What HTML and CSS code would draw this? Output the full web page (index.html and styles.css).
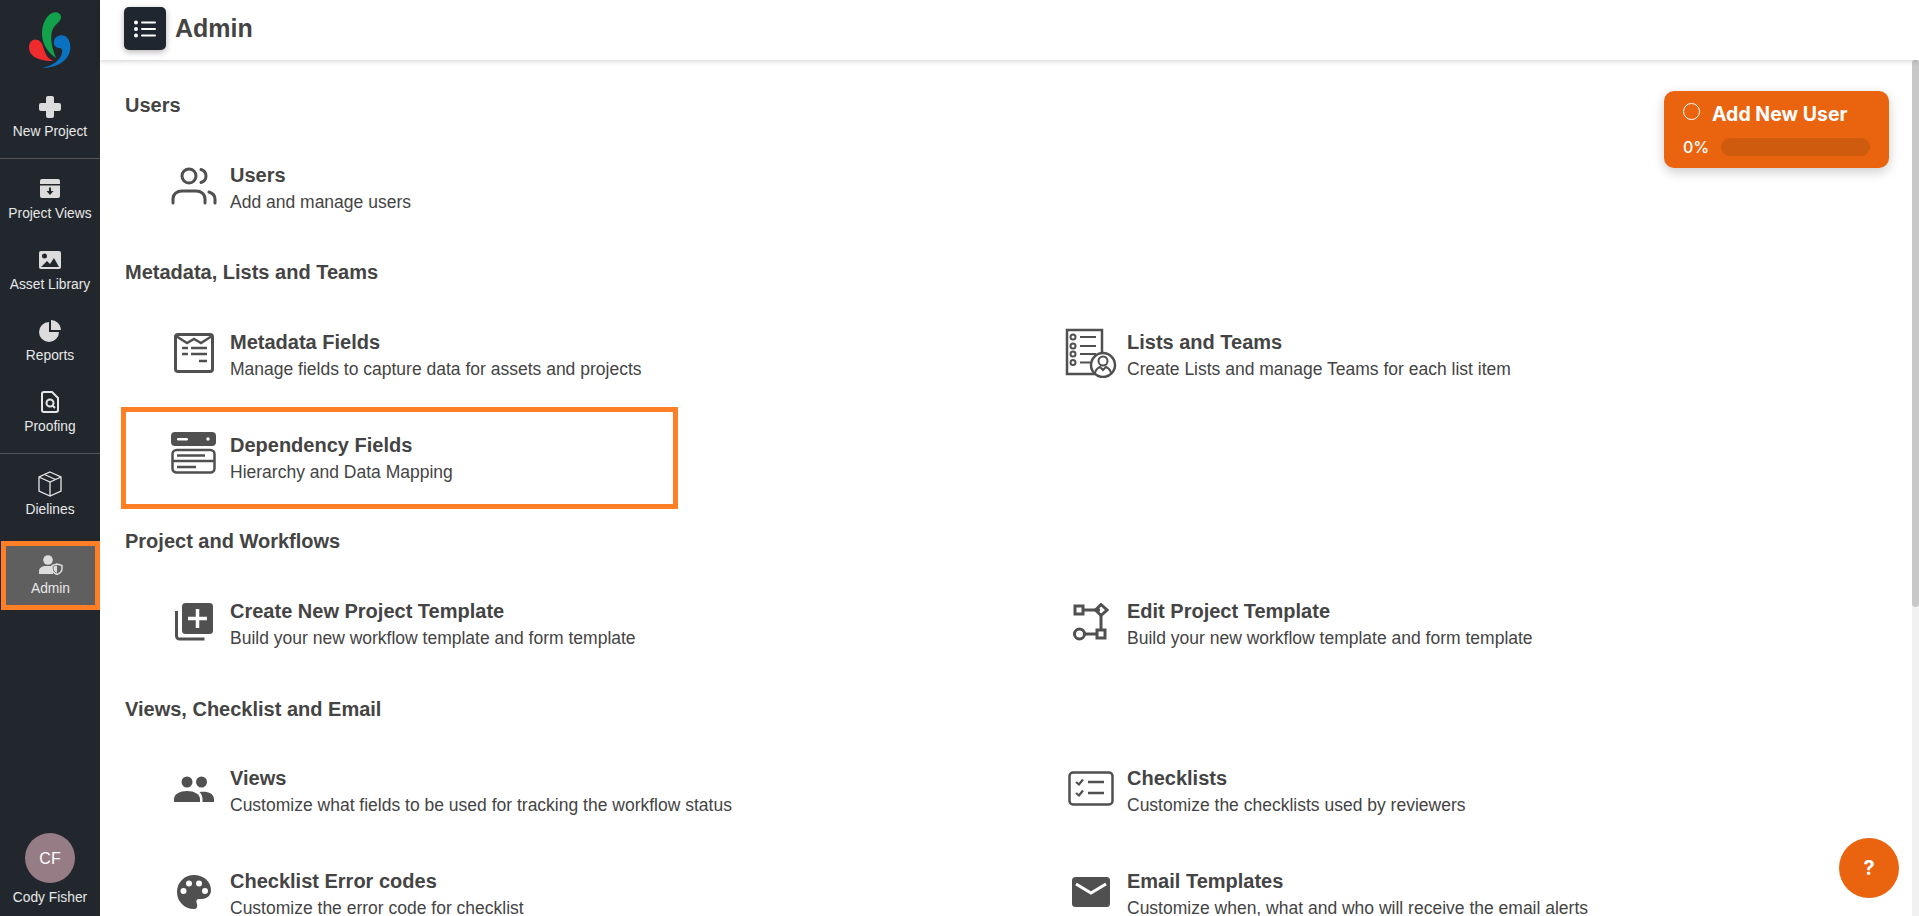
FILE: index.html
```html
<!DOCTYPE html>
<html lang="en">
<head>
    <meta charset="UTF-8">
    <meta name="viewport" content="width=device-width, initial-scale=1.0">
    <title>Admin</title>
    <link rel="stylesheet" href="styles.css">
</head>
<body>
    <div class="app">
        <aside class="sidebar">
            <div class="logo">
                <svg width="44" height="60" viewBox="0 0 44 60">
                    <path fill="#12a24b" d="M24 3C28 1 33 3 33 7C33 11 30 12 26 17C22 22 22 34 28 48C22 44 14 36 14 24C14 14 18 6 24 3z"/>
                    <path fill="#ef2b2d" d="M1 37C1 31 6 28 10 30C15 32 15 38 17 42C18 46 21 49 25 51C16 51 8 49 4 45C2 43 1 40 1 37z"/>
                    <path fill="#0a72c0" d="M26 31C27 26 33 24 37 26C42 29 44 37 41 44C37 53 26 58 14 58C24 56 33 50 34 43C35 39 33 38 31 38C28 38 25 35 26 31z"/>
                </svg>
            </div>
            <a class="nav-item nav-new">
                <div class="nav-icon">
                    <svg width="22" height="22" viewBox="0 0 22 22"><path fill="#dcdcdc" d="M9 0h4a2 2 0 0 1 2 2v5h5a2 2 0 0 1 2 2v4a2 2 0 0 1-2 2h-5v5a2 2 0 0 1-2 2H9a2 2 0 0 1-2-2v-5H2a2 2 0 0 1-2-2V9a2 2 0 0 1 2-2h5V2a2 2 0 0 1 2-2z"/></svg>
                </div>
                <span>New Project</span>
            </a>
            <div class="nav-group">
                <a class="nav-item">
                    <div class="nav-icon">
                        <svg width="22" height="20" viewBox="0 0 22 20"><path fill="#dcdcdc" d="M3 0h16a2 2 0 0 1 2 2v3H1V2a2 2 0 0 1 2-2zM1 6.500h20V17a2 2 0 0 1-2 2H3a2 2 0 0 1-2-2z"/><path fill="#22272e" d="M10 8.500h2V12h2.500L11 16l-3.500-4H10z"/></svg>
                    </div>
                    <span>Project Views</span>
                </a>
                <a class="nav-item">
                    <div class="nav-icon">
                        <svg width="24" height="20" viewBox="0 0 24 20"><path fill="#dcdcdc" d="M3 1h18a2 2 0 0 1 2 2v14a2 2 0 0 1-2 2H3a2 2 0 0 1-2-2V3a2 2 0 0 1 2-2z"/><circle cx="6.500" cy="6" r="2.500" fill="#22272e"/><path fill="#22272e" d="M3 17l6-6 3 3 4-6 5 9z"/></svg>
                    </div>
                    <span>Asset Library</span>
                </a>
                <a class="nav-item">
                    <div class="nav-icon">
                        <svg width="22" height="22" viewBox="0 0 22 22"><path fill="#dcdcdc" d="M10 2v10h10a10 10 0 1 1-10-10z"/><path fill="#dcdcdc" d="M12 0a10 10 0 0 1 10 10H12z"/></svg>
                    </div>
                    <span>Reports</span>
                </a>
                <a class="nav-item">
                    <div class="nav-icon">
                        <svg width="18" height="22" viewBox="0 0 18 22"><path fill="none" stroke="#e6e6e6" stroke-width="2" d="M3 1h8l6 6v12a2 2 0 0 1-2 2H3a2 2 0 0 1-2-2V3a2 2 0 0 1 2-2z"/><circle cx="9" cy="12" r="3.500" fill="none" stroke="#e6e6e6" stroke-width="2"/><path stroke="#e6e6e6" stroke-width="2" d="M11.500 14.500L14 17"/></svg>
                    </div>
                    <span>Proofing</span>
                </a>
            </div>
            <div class="nav-group nav-group-short">
                <a class="nav-item">
                    <div class="nav-icon">
                        <svg width="26" height="26" viewBox="0 0 26 26" fill="none" stroke="#e6e6e6" stroke-width="1.300"><path d="M13 1l11 5v14l-11 5-11-5V6z"/><path d="M2 6l11 5 11-5M13 11v14M7.500 3.500l11 5"/></svg>
                    </div>
                    <span>Dielines</span>
                </a>
            </div>
            <a class="nav-item nav-active">
                <div class="nav-icon">
                    <svg width="24" height="20" viewBox="0 0 24 20"><circle cx="9" cy="5" r="4.800" fill="#dcdcdc"/><path fill="#dcdcdc" d="M0 19v-3c0-3 3-5 7-5h4c2 0 3 .5 3 .5V19z"/><path fill="#5f5f5f" stroke="#dcdcdc" stroke-width="1.500" d="M18 9l5 1.500v3c0 3-2.500 5-5 6-2.500-1-5-3-5-6v-3z"/><path fill="#dcdcdc" d="M18 10.500v7.500c-2-1-3.500-2.500-3.500-4.500v-2z"/></svg>
                </div>
                <span>Admin</span>
            </a>
            <div class="profile">
                <div class="avatar">CF</div>
                <span>Cody Fisher</span>
            </div>
        </aside>

        <div class="content">
            <header class="topbar">
                <button class="menu-btn">
                    <svg width="22" height="18" viewBox="0 0 22 18" fill="#fff"><circle cx="2" cy="2.500" r="2"/><circle cx="2" cy="9" r="2"/><circle cx="2" cy="15.500" r="2"/><rect x="7" y="1.500" width="15" height="2" rx="1"/><rect x="7" y="8" width="15" height="2" rx="1"/><rect x="7" y="14.500" width="15" height="2" rx="1"/></svg>
                </button>
                <h1>Admin</h1>
            </header>

            <main class="admin">
                <h2>Users</h2>
                <div class="item-row">
                    <a class="admin-item">
                        <div class="item-icon">
                            <svg width="46" height="38" viewBox="0 0 46 38" fill="none" stroke="#505050" stroke-width="3" stroke-linecap="round"><circle cx="18" cy="9" r="7"/><path d="M2 36v-4c0-5 4-8 9-8h14c5 0 9 3 9 8v4"/><path d="M30 2.500c3 1 5 3.500 5 6.500s-2 5.500-5 6.500"/><path d="M38 25c3 1 6 3.500 6 7v4"/></svg>
                        </div>
                        <div class="item-text"><h3>Users</h3><p>Add and manage users</p></div>
                    </a>
                </div>

                <h2>Metadata, Lists and Teams</h2>
                <div class="item-row">
                    <a class="admin-item">
                        <div class="item-icon">
                            <svg width="40" height="40" viewBox="0 0 40 40"><rect x="1.500" y="1.500" width="37" height="37" rx="2.500" fill="none" stroke="#505050" stroke-width="3"/><path fill="none" stroke="#505050" stroke-width="2.500" d="M2 3l11 7 7-4 7 4 11-7"/><path stroke="#505050" stroke-width="2.500" d="M8 15h6M17 15h16M8 21h6M17 21h16M25 28h8"/></svg>
                        </div>
                        <div class="item-text"><h3>Metadata Fields</h3><p>Manage fields to capture data for assets and projects</p></div>
                    </a>
                    <a class="admin-item">
                        <div class="item-icon">
                            <svg width="52" height="50" viewBox="0 0 52 50"><path fill="none" stroke="#505050" stroke-width="2.500" d="M32 46H2V2h35v31"/><g fill="none" stroke="#505050" stroke-width="2"><circle cx="8" cy="9" r="2.500"/><circle cx="8" cy="18" r="2.500"/><circle cx="8" cy="26" r="2.500"/><circle cx="8" cy="34.500" r="2.500"/><path d="M15 9h16M15 18h16M15 26h16M15 34.500h10"/></g><circle cx="38" cy="37" r="12" fill="#fff" stroke="#505050" stroke-width="2.500"/><circle cx="38" cy="33" r="4.500" fill="none" stroke="#505050" stroke-width="2"/><path fill="none" stroke="#505050" stroke-width="2" d="M30 46c0-5 3-6 5-7l3 3 3-3c2 1 5 2 5 7"/></svg>
                        </div>
                        <div class="item-text"><h3>Lists and Teams</h3><p>Create Lists and manage Teams for each list item</p></div>
                    </a>
                    <a class="admin-item item-marked">
                        <div class="item-icon">
                            <svg width="46" height="42" viewBox="0 0 46 42"><rect x="0" y="0" width="45" height="14" rx="4" fill="#505050"/><rect x="6" y="6" width="11" height="2.500" rx="1.200" fill="#fff"/><circle cx="37" cy="7" r="1.700" fill="#fff"/><rect x="1.500" y="18" width="42" height="22.500" rx="4" fill="none" stroke="#505050" stroke-width="2.500"/><path stroke="#505050" stroke-width="2.500" d="M2 29h41M6 23.500h28M6 35h19"/></svg>
                        </div>
                        <div class="item-text"><h3>Dependency Fields</h3><p>Hierarchy and Data Mapping</p></div>
                    </a>
                </div>

                <h2>Project and Workflows</h2>
                <div class="item-row">
                    <a class="admin-item">
                        <div class="item-icon">
                            <svg width="38" height="38" viewBox="0 0 38 38"><rect x="7" y="0" width="31" height="31" rx="3.500" fill="#505050"/><path stroke="#fff" stroke-width="3.500" d="M22.500 6v19M13 15.500h19"/><path fill="none" stroke="#505050" stroke-width="3" d="M1.500 8v25a3 3 0 0 0 3 3h25"/></svg>
                        </div>
                        <div class="item-text"><h3>Create New Project Template</h3><p>Build your new workflow template and form template</p></div>
                    </a>
                    <a class="admin-item">
                        <div class="item-icon">
                            <svg width="36" height="38" viewBox="0 0 36 38" fill="none" stroke="#505050" stroke-width="3"><rect x="2" y="3" width="8" height="8"/><path d="M10 7h17"/><path d="M28 1.500l6 5.500-6 5.500-5.500-5.500z"/><path d="M28 13v15"/><rect x="24" y="27" width="8" height="8"/><path d="M24 31H12"/><circle cx="6.500" cy="31" r="5"/></svg>
                        </div>
                        <div class="item-text"><h3>Edit Project Template</h3><p>Build your new workflow template and form template</p></div>
                    </a>
                </div>

                <h2 class="views-title">Views, Checklist and Email</h2>
                <div class="item-row">
                    <a class="admin-item">
                        <div class="item-icon">
                            <svg width="40" height="26" viewBox="0 0 40 26" fill="#505050"><circle cx="13" cy="6" r="5.500"/><circle cx="27.500" cy="6" r="5.500"/><path d="M0 26v-3c0-5 6-8 13-8s13 3 13 8v3z"/><path d="M28.500 26v-3c0-3-1-5-3-7 8-1 14 1 14.500 7v3z"/></svg>
                        </div>
                        <div class="item-text"><h3>Views</h3><p>Customize what fields to be used for tracking the workflow status</p></div>
                    </a>
                    <a class="admin-item">
                        <div class="item-icon">
                            <svg width="46" height="36" viewBox="0 0 46 36"><rect x="1.500" y="1.500" width="43" height="32" rx="3.500" fill="none" stroke="#505050" stroke-width="2.500"/><path fill="none" stroke="#505050" stroke-width="2.200" d="M8 11l3 2.500 4-5M8 22l3 2.500 4-5"/><path stroke="#505050" stroke-width="2.500" d="M20 11h16M20 22h16"/></svg>
                        </div>
                        <div class="item-text"><h3>Checklists</h3><p>Customize the checklists used by reviewers</p></div>
                    </a>
                    <a class="admin-item">
                        <div class="item-icon">
                            <svg width="34" height="34" viewBox="0 0 34 34"><path fill="#505050" fill-rule="evenodd" d="M17 0c9.500 0 17 6.500 17 15 0 5.500-4 9-9 9h-3c-2 0-3 1.500-2.500 3.500.6 2 1 3 .5 4.500-.5 1.500-1.500 2-3 2C7.500 34 0 26.500 0 17S7.500 0 17 0zM6.500 13a3 3 0 1 0 0 6 3 3 0 0 0 0-6zM12 5.500a3 3 0 1 0 0 6 3 3 0 0 0 0-6zm10 0a3 3 0 1 0 0 6 3 3 0 0 0 0-6zM28 13a3 3 0 1 0 0 6 3 3 0 0 0 0-6z"/></svg>
                        </div>
                        <div class="item-text"><h3>Checklist Error codes</h3><p>Customize the error code for checklist</p></div>
                    </a>
                    <a class="admin-item">
                        <div class="item-icon">
                            <svg width="38" height="30" viewBox="0 0 38 30"><rect width="38" height="30" rx="3.500" fill="#505050"/><path fill="none" stroke="#fff" stroke-width="3" d="M4 7l15 9 15-9"/></svg>
                        </div>
                        <div class="item-text"><h3>Email Templates</h3><p>Customize when, what and who will receive the email alerts</p></div>
                    </a>
                </div>
            </main>
        </div>

        <div class="scroll-track"><div class="scroll-thumb"></div></div>

        <div class="progress-card">
            <div class="progress-title"><span class="progress-dot"></span>Add New User</div>
            <div class="progress-line">
                <span>0%</span>
                <div class="progress-bar"></div>
            </div>
        </div>
        <button class="help-btn">?</button>
    </div>
</body>
</html>
```

FILE: styles.css
```css
* {
    box-sizing: border-box;
}
html, body {
    height: 100%;
}
body {
    margin: 0;
    font-family: 'Liberation Sans', Arial, sans-serif;
    color: #444;
    background: #fff;
    overflow: hidden;
}
.app {
    position: relative;
    display: flex;
    height: 100%;
}

/* sidebar */
.sidebar {
    width: 100px;
    flex-shrink: 0;
    display: flex;
    flex-direction: column;
    background: #22272e;
    color: #eee;
}
.logo {
    height: 84px;
    padding-top: 10px;
    display: flex;
    justify-content: center;
}
.nav-item {
    display: flex;
    flex-direction: column;
    align-items: center;
    gap: 6px;
    font-size: 13.8px;
    line-height: 15px;
    color: #e8e8e8;
}
.nav-icon {
    height: 22px;
    display: flex;
    align-items: center;
    justify-content: center;
}
.nav-new {
    height: 74px;
    padding-top: 12px;
}
.nav-group {
    border-top: 1px solid #555;
    padding: 19px 0;
    display: flex;
    flex-direction: column;
    gap: 28px;
}
.nav-group-short {
    padding-top: 17px;
}
.nav-group-short .nav-icon {
    height: 25px;
}
.nav-active {
    height: 69px;
    margin: 5px 0 0 1px;
    border: 5px solid #ff7f27;
    background: #5f5f5f;
    padding-top: 8px;
    gap: 5px;
}
.profile {
    margin-top: auto;
    padding-bottom: 11px;
    display: flex;
    flex-direction: column;
    align-items: center;
    gap: 7px;
    font-size: 13.8px;
    line-height: 15px;
    color: #e8e8e8;
}
.avatar {
    width: 50px;
    height: 50px;
    border-radius: 50%;
    background: #967c85;
    color: #fff;
    font-size: 16px;
    display: flex;
    align-items: center;
    justify-content: center;
}

/* top bar */
.content {
    flex: 1;
    min-width: 0;
    display: flex;
    flex-direction: column;
}
.topbar {
    height: 60px;
    flex-shrink: 0;
    display: flex;
    align-items: center;
    gap: 9px;
    padding: 0 0 3px 24px;
    background: #fff;
    box-shadow: 0 1px 5px rgba(0, 0, 0, 0.2);
    z-index: 2;
}
.topbar h1 {
    margin: 0;
    font-size: 25px;
    font-weight: bold;
    color: #444;
}
.menu-btn {
    width: 42px;
    height: 43px;
    padding: 0;
    border: none;
    border-radius: 5px;
    background: #1f2630;
    box-shadow: 0 2px 6px rgba(0, 0, 0, 0.3);
    display: flex;
    align-items: center;
    justify-content: center;
}

/* admin list */
.admin {
    flex: 1;
    min-height: 0;
    overflow: hidden;
    padding: 13px 0 0 21px;
}
.admin h2 {
    margin: 0;
    height: 64px;
    padding-left: 4px;
    display: flex;
    align-items: center;
    font-size: 20px;
    font-weight: bold;
    color: #444;
}
.admin h2.views-title {
    padding-top: 3px;
}
.item-row {
    display: grid;
    grid-template-columns: 897px 1fr;
}
.admin-item {
    height: 103px;
    display: flex;
    align-items: center;
    padding-left: 32px;
    border: 5px solid transparent;
}
.item-marked {
    width: 557px;
    height: 102px;
    border-color: #ff7f27;
}
.item-icon {
    width: 72px;
    flex-shrink: 0;
    margin-top: -5px;
    display: flex;
    justify-content: center;
}
.item-marked .item-icon {
    margin-top: -10px;
}
.item-text {
    margin-top: -1px;
}
.item-text h3 {
    margin: 0 0 5px;
    font-size: 20px;
    line-height: 23px;
    font-weight: bold;
    color: #444;
}
.item-text p {
    margin: 0;
    font-size: 17.5px;
    line-height: 20px;
    color: #444;
}

/* floating bits */
.scroll-track {
    position: absolute;
    right: 0;
    top: 60px;
    bottom: 0;
    width: 7px;
    background: #f1f1f1;
    z-index: 1;
}
.scroll-thumb {
    height: 547px;
    border-radius: 4px;
    background: #c8c8c8;
}
.progress-card {
    position: absolute;
    left: 1664px;
    top: 91px;
    width: 225px;
    height: 77px;
    padding: 12px 19px;
    border-radius: 10px;
    background: #ea6410;
    box-shadow: 0 4px 12px rgba(0, 0, 0, 0.2);
    color: #fff;
    font-family: Inter, sans-serif;
    z-index: 3;
}
.progress-title {
    display: flex;
    align-items: center;
    gap: 12px;
    font-size: 19.5px;
    line-height: 22px;
    font-weight: 700;
}
.progress-dot {
    width: 17px;
    height: 17px;
    margin-top: -5px;
    border: 1.5px solid #fff;
    border-radius: 50%;
}
.progress-line {
    display: flex;
    align-items: center;
    gap: 12px;
    margin-top: 12px;
    font-size: 16px;
    font-weight: 500;
}
.progress-bar {
    width: 150px;
    height: 18px;
    border-radius: 9px;
    background: #cf5b0e;
}
.help-btn {
    position: absolute;
    left: 1839px;
    top: 838px;
    width: 60px;
    height: 60px;
    padding: 0;
    border: none;
    border-radius: 50%;
    background: #ea6410;
    color: #fff;
    font-family: Inter, sans-serif;
    font-size: 20px;
    font-weight: 700;
    z-index: 3;
}
```
